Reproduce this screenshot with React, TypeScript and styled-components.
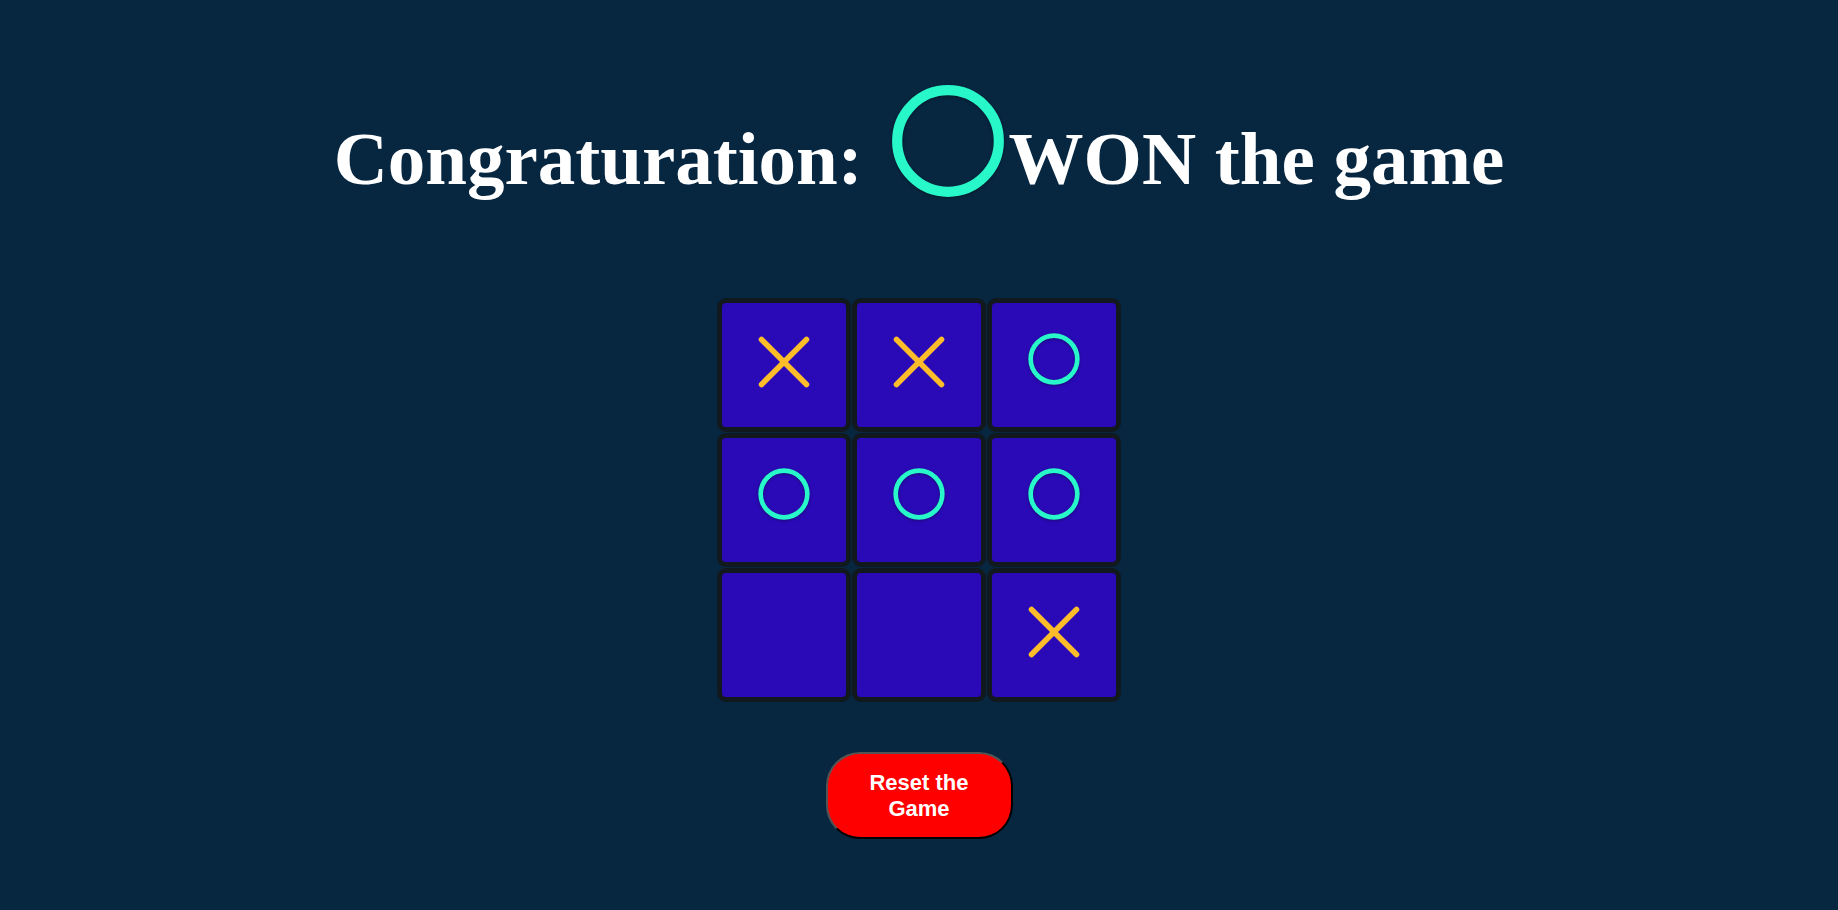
import React from "react";
import styled, { createGlobalStyle } from "styled-components";

const GlobalStyle = createGlobalStyle`
  html, body {
    margin: 0;
    padding: 0;
    background: #072640;
  }
  body {
    font-family: "Liberation Serif", "Times New Roman", serif;
  }
`;

const Page = styled.main`
  min-height: 910px;
  box-sizing: border-box;
  padding-top: 80px;
  display: flex;
  flex-direction: column;
  align-items: center;
  background: #072640;
`;

const Title = styled.h1`
  margin: 0;
  color: #ffffff;
  font-family: "Liberation Serif", "Times New Roman", serif;
  font-weight: 700;
  font-size: 75px;
  text-align: center;
  white-space: nowrap;
`;

const TitleIcon = styled.span`
  display: inline-block;
  vertical-align: -18.5px;
  margin-left: 5px;
  line-height: 0;
`;

const Board = styled.div`
  margin-top: 96px;
  display: grid;
  grid-template-columns: repeat(3, 134px);
  grid-auto-rows: 134px;
  gap: 1px;
`;

const Cell = styled.button`
  box-sizing: border-box;
  width: 134px;
  height: 134px;
  padding: 0;
  border: 5px solid #11191f;
  border-radius: 9px;
  background: #2a0ab6;
  display: flex;
  align-items: center;
  justify-content: center;
  cursor: pointer;
`;

const Mark = styled.span<{ $lift: number }>`
  display: flex;
  line-height: 0;
  margin-bottom: ${(p) => p.$lift}px;
`;

const ResetButton = styled.button`
  margin-top: 50px;
  box-sizing: border-box;
  width: 187px;
  height: 87px;
  padding: 16px 20px;
  border: 2px outset #000000;
  border-radius: 34px;
  background: #ff0000;
  color: #ffffff;
  font-family: "Liberation Sans", Arial, sans-serif;
  font-weight: 700;
  font-size: 22px;
  line-height: normal;
  cursor: pointer;
`;

const CircleIcon = ({ size }: { size: number }) => (
  <svg
    width={size}
    height={size}
    viewBox="0 0 24 24"
    fill="none"
    stroke="#27f7c9"
    strokeWidth={2}
    style={{ filter: "drop-shadow(0 1.5px 1.5px rgba(0,0,0,0.35))" }}
  >
    <circle cx="12" cy="12" r="10" />
  </svg>
);

const CrossIcon = () => (
  <svg width={52} height={52} viewBox="0 0 52 52" fill="none" stroke="#ffbd2a" strokeWidth={5.5} strokeLinecap="round">
    <line x1="3.5" y1="3.5" x2="48.5" y2="48.5" />
    <line x1="48.5" y1="3.5" x2="3.5" y2="48.5" />
  </svg>
);

type Val = "x" | "o" | "";
const board: Val[] = ["x", "x", "o", "o", "o", "o", "", "", "x"];

export default function App() {
  return (
    <>
      <GlobalStyle />
      <Page>
        <Title>
          Congraturation:{" "}
          <TitleIcon>
            <CircleIcon size={122} />
          </TitleIcon>
          WON the game
        </Title>
        <Board>
          {board.map((v, i) => (
            <Cell key={i}>
              {v === "x" && (
                <Mark $lift={6}>
                  <CrossIcon />
                </Mark>
              )}
              {v === "o" && (
                <Mark $lift={12}>
                  <CircleIcon size={56} />
                </Mark>
              )}
            </Cell>
          ))}
        </Board>
        <ResetButton>Reset the Game</ResetButton>
      </Page>
    </>
  );
}
